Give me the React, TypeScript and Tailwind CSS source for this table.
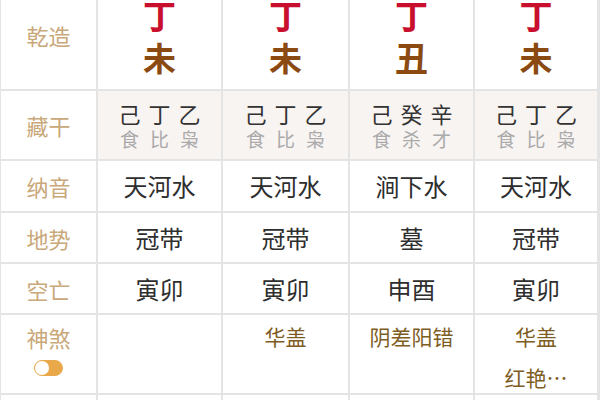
const FONT = "font-['Noto_Sans_CJK_SC','Noto_Sans',sans-serif]";

type Pillar = {
  stem: string;
  branch: string;
  hidden: string[];
  gods: string[];
  nayin: string;
  dishi: string;
  kongwang: string;
  shensha: string[];
};

const pillars: Pillar[] = [
  { stem: '丁', branch: '未', hidden: ['己', '丁', '乙'], gods: ['食', '比', '枭'], nayin: '天河水', dishi: '冠带', kongwang: '寅卯', shensha: [] },
  { stem: '丁', branch: '未', hidden: ['己', '丁', '乙'], gods: ['食', '比', '枭'], nayin: '天河水', dishi: '冠带', kongwang: '寅卯', shensha: ['华盖'] },
  { stem: '丁', branch: '丑', hidden: ['己', '癸', '辛'], gods: ['食', '杀', '才'], nayin: '涧下水', dishi: '墓', kongwang: '申酉', shensha: ['阴差阳错'] },
  { stem: '丁', branch: '未', hidden: ['己', '丁', '乙'], gods: ['食', '比', '枭'], nayin: '天河水', dishi: '冠带', kongwang: '寅卯', shensha: ['华盖', '红艳…'] },
];

function Label({ children }: { children: React.ReactNode }) {
  return (
    <div className="bg-white flex items-center justify-center text-[22px] text-[#c9a87a] leading-none">
      {children}
    </div>
  );
}

function Cell({ children }: { children: React.ReactNode }) {
  return (
    <div className="bg-white flex items-center justify-center text-[24px] text-[#2e2e2e] leading-none">
      {children}
    </div>
  );
}

export default function App() {
  return (
    <div className={`w-[600px] h-[400px] overflow-hidden bg-white ${FONT}`}>
      <div
        className="mt-[-20px] pl-[1px] pr-[1px] bg-[#e4e4e4] grid gap-[2px] grid-cols-[95px_123px_125px_123px_122px] grid-rows-[109px_68px_50px_49px_49px_78px_60px]"
      >
        {/* 乾造 */}
        <Label>乾造</Label>
        {pillars.map((p, i) => (
          <div key={i} className="bg-white flex flex-col items-center justify-center gap-[9px] pt-[3px] font-bold text-[33px] leading-none">
            <span className="text-[#c8102e]">{p.stem}</span>
            <span className="text-[#8a4a12]">{p.branch}</span>
          </div>
        ))}

        {/* 藏干 */}
        <Label>藏干</Label>
        {pillars.map((p, i) => (
          <div key={i} className="bg-[#f8f4f2] flex flex-col items-center justify-center gap-[5px] leading-none">
            <div className="flex gap-[8px] text-[22px] text-[#333]">
              {p.hidden.map((c, j) => <span key={j}>{c}</span>)}
            </div>
            <div className="flex gap-[11px] text-[19px] text-[#aaa]">
              {p.gods.map((c, j) => <span key={j}>{c}</span>)}
            </div>
          </div>
        ))}

        {/* 纳音 */}
        <Label>纳音</Label>
        {pillars.map((p, i) => <Cell key={i}>{p.nayin}</Cell>)}

        {/* 地势 */}
        <Label>地势</Label>
        {pillars.map((p, i) => <Cell key={i}>{p.dishi}</Cell>)}

        {/* 空亡 */}
        <Label>空亡</Label>
        {pillars.map((p, i) => <Cell key={i}>{p.kongwang}</Cell>)}

        {/* 神煞 */}
        <div className="bg-white flex flex-col items-center pt-[11px] gap-[12px]">
          <span className="text-[22px] text-[#c9a87a] leading-none">神煞</span>
          <span className="relative w-[29px] h-[16px] rounded-full bg-[#e9a94a] border border-[#e9a94a]">
            <span className="absolute left-0 top-0 w-[14px] h-[14px] rounded-full bg-white" />
          </span>
        </div>
        {pillars.map((p, i) => (
          <div key={i} className="bg-white flex flex-col items-center pt-[11px] gap-[20px] text-[21px] text-[#7e5d24] leading-none">
            {p.shensha.map((s, j) => <span key={j}>{s}</span>)}
          </div>
        ))}

        {/* next row */}
        <div className="bg-white" />
        {pillars.map((_, i) => <div key={i} className="bg-white" />)}
      </div>
    </div>
  );
}
